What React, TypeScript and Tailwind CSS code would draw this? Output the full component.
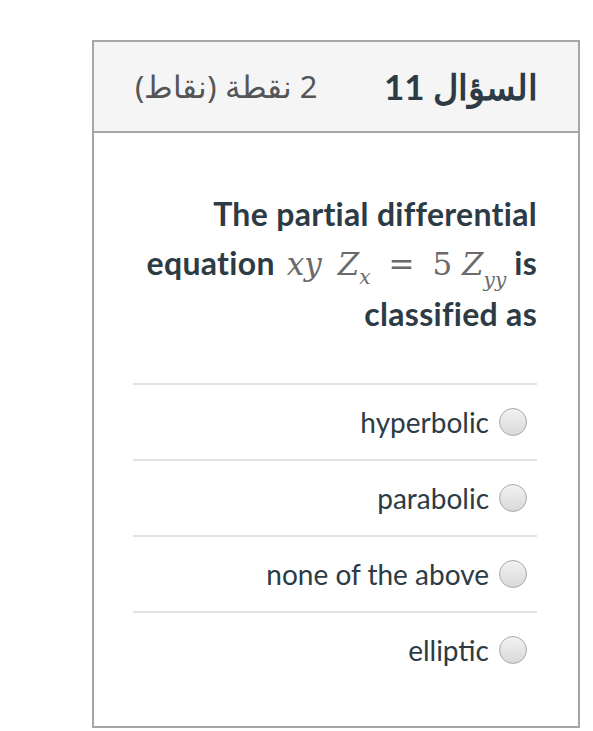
import React from 'react';

const OPTIONS = ['hyperbolic', 'parabolic', 'none of the above', 'elliptic'];

const Radio: React.FC = () => (
  <span className="inline-block w-[28px] h-[28px] rounded-full border border-[#a9a9a9] bg-gradient-to-b from-[#f2f2f2] to-[#d9d9d9] shrink-0" />
);

const Math: React.FC = () => (
  <span
    className="italic text-[#6b6b6b] font-normal text-[31px] ml-[12px] mr-[8px] tracking-normal"
    style={{ fontFamily: '"DejaVu Serif", "Liberation Serif", serif' }}
  >
    <span className="font-light">xy</span> <span className="ml-[6px]">Z</span>
    <sub className="text-[20px] align-[-4px]">x</sub>
    <span className="not-italic mx-[18px]">=</span>
    <span className="not-italic">5</span> Z<sub className="text-[20px] align-[-7px]">yy</sub>
  </span>
);

export default function App() {
  return (
    <div
      className="w-[593px] h-[731px] bg-white pt-[40px] pl-[92px]"
      style={{ fontFamily: 'Lato, "Noto Sans", sans-serif' }}
    >
      <div className="w-[488px] h-[688px] border-2 border-[#a6a6a6] flex flex-col">
        {/* Header */}
        <div
          dir="rtl"
          className="h-[91px] bg-[#f5f5f5] border-b-2 border-[#a6a6a6] flex items-center justify-between pr-[40px] pl-[41px]"
        >
          <span className="text-[35px] font-bold text-[#2d3b45]">السؤال 11</span>
          <span className="text-[31px] text-[#555555]" style={{ fontFamily: '"Noto Sans", Lato, sans-serif' }}>
            2 نقطة (نقاط)
          </span>
        </div>

        {/* Body */}
        <div className="pl-[39px] pr-[41px] pt-[56px]">
          <p className="text-right text-[32px] font-bold text-[#2d3b45] leading-[49px] tracking-[0.3px]">
            The partial differential
            <br />
            equation<Math />is
            <br />
            classified as
          </p>

          <div className="mt-[45px]">
            {OPTIONS.map((opt) => (
              <div
                key={opt}
                className="h-[76px] border-t-2 border-[#e2e2e2] flex items-center justify-end gap-[10px] pr-[10px]"
              >
                <span className="text-[28px] text-[#2d3b45]">{opt}</span>
                <Radio />
              </div>
            ))}
          </div>
        </div>
      </div>
    </div>
  );
}
